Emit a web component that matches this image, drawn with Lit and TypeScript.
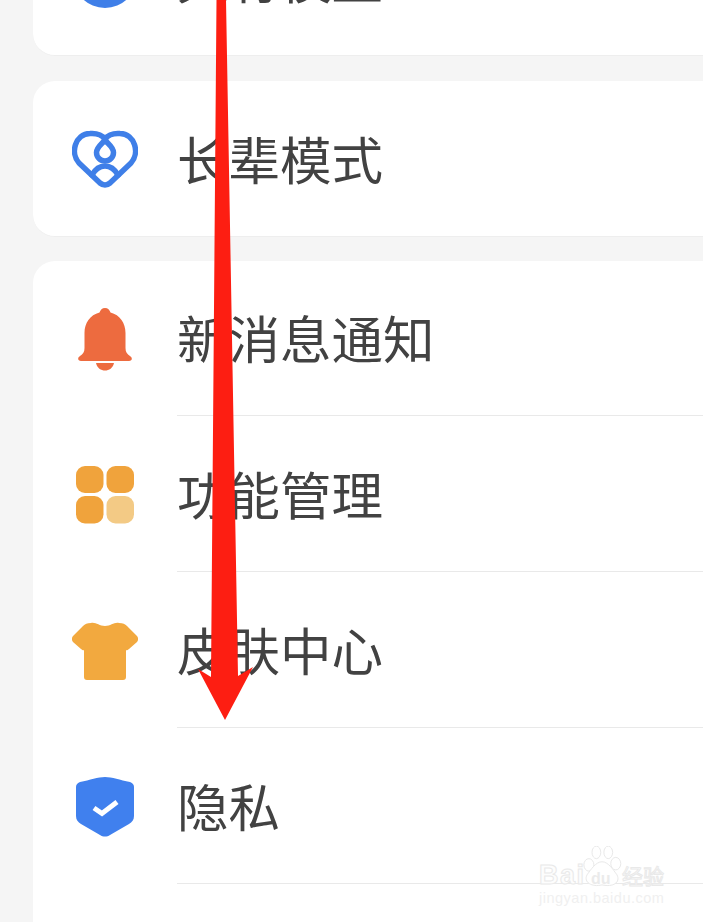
import { LitElement, html, css, svg } from "lit";
import { customElement } from "lit/decorators.js";

const heart = html`<svg width="66" height="58" viewBox="0 0 66 58" fill="none" stroke="#3f7fe8" stroke-width="5.500" stroke-linejoin="round" stroke-linecap="round">
  <path d="M28 53 L7 33 C-2 23 3 4 18 3.500 C25 3 30 5 33 9 C36 5 41 3 48 3.500 C63 4 68 23 59 33 L38 53 Q33 57 28 53 Z"/>
  <path d="M33 10 C30 14 24.500 17 24.500 22.500 A8.500 8.500 0 0 0 41.500 22.500 C41.500 17 36 14 33 10 Z"/>
  <path d="M20 45 C24 38 28 36 33 36 C38 36 42 38 46 45"/>
</svg>`;
const bell = html`<svg width="54" height="63" viewBox="0 0 54 63" fill="#ed6b3f">
  <path d="M27 0 C30 0 31.500 2 32.500 4.500 C42 7 47.500 15 47.500 25 L47.500 40 C47.500 44 49 46 52 48 C55 50 54 53 51 53 L3 53 C0 53 -1 50 2 48 C5 46 6.500 44 6.500 40 L6.500 25 C6.500 15 12 7 21.500 4.500 C22.500 2 24 0 27 0 Z"/>
  <path d="M18 55 L36 55 C35 60 31 62.500 27 62.500 C23 62.500 19 60 18 55 Z"/>
</svg>`;
const grid = html`<svg width="58" height="58" viewBox="0 0 58 58">
  <rect x="0" y="0" width="27.500" height="27" rx="9" fill="#f0a33c"/>
  <rect x="30.500" y="0" width="27.500" height="27" rx="9" fill="#f0a33c"/>
  <rect x="0" y="30" width="27.500" height="27.500" rx="9" fill="#f0a33c"/>
  <rect x="30.500" y="30" width="27.500" height="27.500" rx="9" fill="#f3ca85"/>
</svg>`;
const shirt = html`<svg width="66" height="58" viewBox="0 0 66 58" fill="#f2a93f">
  <path d="M19 1 C24 0 27 4 33 4 C39 4 42 0 47 1 C51 1 53 2 55 4 L65 14 C66.500 16 66.500 18 65 20 L57 27 C55.500 28.500 54 28.500 54 28 L54 55 C54 57 53 58 51 58 L15 58 C13 58 12 57 12 55 L12 28 C12 28.500 10.500 28.500 9 27 L1 20 C-0.500 18 -0.500 16 1 14 L11 4 C13 2 15 1 19 1 Z"/>
</svg>`;
const shield = html`<svg width="58" height="60" viewBox="0 0 58 60">
  <path fill="#4080ee" d="M29 0 C36 0 44 3 54 5 C57 6 58 8 58 10 L58 39 C58 43 56 45 53 47 L34 58 C31 60 27 60 24 58 L5 47 C2 45 0 43 0 39 L0 10 C0 8 1 6 4 5 C14 3 22 0 29 0 Z"/>
  <path fill="none" stroke="#fff" stroke-width="5" stroke-linejoin="miter" d="M18 31 L26 36.500 L41 25"/>
</svg>`;
const arrow = svg`<polygon fill="#fd1e12" points="216.500,0 226,0 238,676 253,667 225,720 198,669 211,677"/>`;

@customElement("app-root")
export class AppRoot extends LitElement {
  static styles = css`
    :host { display: block; width: 703px; height: 922px; position: relative; overflow: hidden; background: #f5f5f5; font-family: "Noto Sans CJK SC", "Noto Sans", sans-serif; color: #424242; }
    .page { display: flex; flex-direction: column; gap: 25px; padding-left: 33px; margin-top: -100px; }
    .card { background: #fff; border-radius: 22px 0 0 22px; border-bottom: 1px solid #eeeeee; box-sizing: border-box; }
    .open { border-radius: 22px 0 0 0; border-bottom: 0; padding-bottom: 80px; margin-top: -1px; }
    .open .row:first-child { margin-top: -1px; }
    .open .ic { padding-top: 2px; }
    .row { height: 155px; display: flex; align-items: center; box-sizing: border-box; }
    .open .row { height: 156px; }
    .ic { width: 144px; flex: none; display: flex; justify-content: center; box-sizing: border-box; }
    .body { flex: 1; height: 100%; display: flex; align-items: center; font-size: 51.500px; line-height: 1; font-weight: 400; padding-bottom: 2px; box-sizing: border-box; }
    .div .body { border-bottom: 1px solid #e9e9e9; }
    .dot { width: 64px; height: 64px; border-radius: 50%; background: #3f7fe8; margin-bottom: 4px; }
    .overlay { position: absolute; inset: 0; pointer-events: none; }
    .wm { position: absolute; left: 538px; top: 846px; width: 130px; height: 70px; }
    .wm1 { position: absolute; left: 1px; top: 14px; font: 700 27px "Liberation Sans", sans-serif; letter-spacing: 1.500px; color: #fdfdfd; -webkit-text-stroke: 1px #e9e9e9; }
    .wm2 { position: absolute; left: 84px; top: 19px; font-size: 21px; line-height: 1; color: #fdfdfd; -webkit-text-stroke: 1px #e9e9e9; }
    .wm3 { position: absolute; left: 1px; top: 44px; font: 400 14.500px "Liberation Sans", sans-serif; letter-spacing: .5px; color: #f0f0f0; white-space: nowrap; }
    .paw { position: absolute; left: 44px; top: 0; }
    .wm4 { position: absolute; left: 53px; top: 24px; font: 700 16px "Liberation Sans", sans-serif; color: #ebebeb; }
  `;
  row(icon: unknown, label: string, div = false) {
    return html`<div class="row ${div ? "div" : ""}"><div class="ic">${icon}</div><div class="body">${label}</div></div>`;
  }
  render() {
    return html`
      <div class="page">
        <div class="card">${this.row(html`<div class="dot"></div>`, "具有模型")}</div>
        <div class="card">${this.row(heart, "长辈模式")}</div>
        <div class="card open">
          ${this.row(bell, "新消息通知", true)}
          ${this.row(grid, "功能管理", true)}
          ${this.row(shirt, "皮肤中心", true)}
          ${this.row(shield, "隐私", true)}
        </div>
      </div>
      <svg class="overlay" width="703" height="922" viewBox="0 0 703 922">${arrow}</svg>
      <div class="wm">
        <span class="wm1">Bai</span>
        <svg class="paw" width="40" height="44" viewBox="0 0 64 70" fill="#fff" stroke="#e9e9e9" stroke-width="1.600">
          <ellipse cx="11" cy="30" rx="8" ry="10"/><ellipse cx="23" cy="10" rx="7" ry="10"/><ellipse cx="42" cy="10" rx="7" ry="10"/><ellipse cx="54" cy="28" rx="8" ry="10"/>
          <path d="M32 25 C42 25 50 38 56 46 C62 58 50 66 32 62 C16 66 2 58 8 46 C14 38 22 25 32 25 Z"/>
        </svg>
        <span class="wm4">du</span>
        <span class="wm2">经验</span>
        <span class="wm3">jingyan.baidu.com</span>
      </div>
    `;
  }
}
